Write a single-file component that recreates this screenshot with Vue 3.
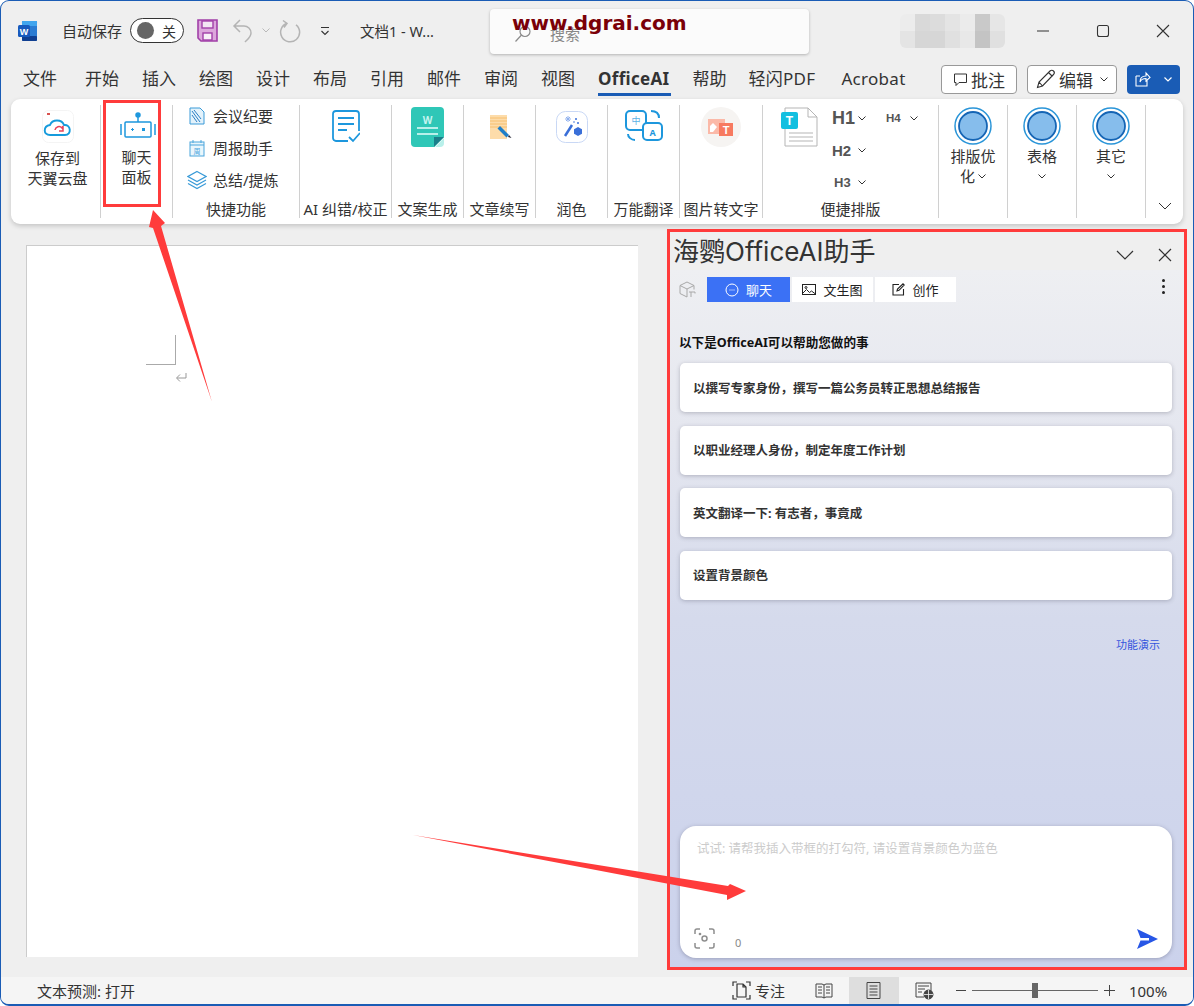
<script setup>
const menuTabs = ['文件', '开始', '插入', '绘图', '设计', '布局', '引用', '邮件', '审阅', '视图']
const cards = [
  '以撰写专家身份，撰写一篇公务员转正思想总结报告',
  '以职业经理人身份，制定年度工作计划',
  '英文翻译一下: 有志者，事竟成',
  '设置背景颜色'
]
const blurCells = ['#ececec','#d9d9d9','#dcdcdc','#e4e4e4','#ebebeb','#c9c9c9','#e6e6e6','#e4e4e4','#d6d6d6','#d6d6d6','#e0e0e0','#e8e8e8','#c4c4c4','#e0e0e0']
</script>

<template>
  <div class="window">
    <header class="titlebar">
      <svg class="word" width="20" height="22" viewBox="0 0 20 22">
        <rect x="4" y="1" width="15" height="20" rx="1.5" fill="#2b7cd3"/>
        <rect x="4" y="1" width="15" height="5" fill="#41a5ee"/>
        <rect x="4" y="11" width="15" height="5" fill="#2b7cd3"/>
        <rect x="4" y="16" width="15" height="5" rx="1" fill="#103f91"/>
        <rect x="0" y="5" width="12" height="12" rx="1.5" fill="#185abd"/>
        <text x="6" y="14.5" text-anchor="middle" class="word-w">W</text>
      </svg>
      <span class="autosave">自动保存</span>
      <div class="toggle"><i></i><span>关</span></div>
      <svg class="save" width="21" height="23" viewBox="0 0 21 23">
        <path d="M1 1h19v21H4l-3-3z" fill="#dca7dc" stroke="#a13fa8" stroke-width="1.6"/>
        <rect x="5" y="2" width="11" height="7" fill="#f3e5f3" stroke="#a13fa8" stroke-width="1.4"/>
        <rect x="6" y="14" width="9" height="7" fill="#f8f0f8" stroke="#a13fa8" stroke-width="1.4"/>
      </svg>
      <svg class="undo" width="22" height="26" viewBox="0 0 22 26" fill="none" stroke="#b4b4b4" stroke-width="1.5">
        <path d="M8 2 2 8l6 6M2 8h10a7 7 0 0 1 7 7c0 4-3 6-6 9"/>
      </svg>
      <svg class="chev-gray" width="8" height="5" viewBox="0 0 8 5" fill="none" stroke="#b9b9b9"><path d="m.5.5 3.5 3.5L7.500.5"/></svg>
      <svg class="redo" width="22" height="24" viewBox="0 0 22 24" fill="none" stroke="#b4b4b4" stroke-width="1.5">
        <path d="M8 4.300a9.500 9.500 0 1 0 9 1.500M4 1.500l4 3-3 4"/>
      </svg>
      <svg class="qat" width="10" height="10" viewBox="0 0 10 10" fill="none" stroke="#333" stroke-width="1.100">
        <path d="M1 1.500h8M1.500 5 5 8.500 8.500 5"/>
      </svg>
      <span class="docname">文档1   -   W...</span>
      <div class="search">
        <svg width="18" height="18" viewBox="0 0 18 18" fill="none" stroke="#8a8a8a" stroke-width="1.200"><circle cx="11" cy="6.500" r="5"/><path d="M7.500 10 1.500 16.500"/></svg>
        <span>搜索</span>
      </div>
      <div class="blur">
        <i v-for="(c, n) in blurCells" :key="n" :style="{ background: c }"></i>
      </div>
      <div class="winbtns">
        <svg width="14" height="14" viewBox="0 0 14 14" stroke="#333" fill="none" stroke-width="1.100"><path d="M1 7h12"/></svg>
        <svg width="14" height="14" viewBox="0 0 14 14" stroke="#333" fill="none" stroke-width="1.100"><rect x="1.500" y="1.500" width="11" height="11" rx="2"/></svg>
        <svg width="14" height="14" viewBox="0 0 14 14" stroke="#333" fill="none" stroke-width="1.100"><path d="m1 1 12 12M13 1 1 13"/></svg>
      </div>
    </header>

    <nav class="menubar">
      <span v-for="t in menuTabs" :key="t" class="mtab">{{ t }}</span>
      <span class="mtab active">OfficeAI</span>
      <span class="mtab">帮助</span>
      <span class="mtab wide">轻闪PDF</span>
      <span class="mtab wide acrobat">Acrobat</span>
      <div class="menu-actions">
        <button class="mbtn comment">
          <svg width="15" height="15" viewBox="0 0 15 15" fill="none" stroke="#333"><path d="M1.500 2h12v8.500H6l-3 3v-3H1.500z"/></svg>批注
        </button>
        <button class="mbtn edit">
          <svg width="20" height="20" viewBox="0 0 20 20" fill="none" stroke="#333" stroke-width="1.100"><path d="M1.500 18.500 3 13 14 2c1-1 2.500-1 3.500 0s1 2.500 0 3.500L6.500 17zM3 13l3.500 4M12.500 3.500l4 4"/></svg>编辑
          <svg class="ch" width="8" height="5" viewBox="0 0 8 5" fill="none" stroke="#333"><path d="m.5.500 3.500 3.500L7.500.500"/></svg>
        </button>
        <button class="mbtn share">
          <svg width="16" height="16" viewBox="0 0 16 16" fill="none" stroke="#fff" stroke-width="1.100"><path d="M1 5h4M1 5v10h11V9M5 11c0-4 2-6 6-6V2l4 4.500L11 10V7.500c-3 0-5 1-6 3.500z"/></svg>
          <svg width="8" height="5" viewBox="0 0 8 5" fill="none" stroke="#fff" stroke-width="1.200"><path d="m.5.500 3.500 3.500L7.500.500"/></svg>
        </button>
      </div>
    </nav>

    <section class="ribbon">
      <div class="rg first">
        <svg class="ic ic-cloud" width="32" height="33" viewBox="0 0 32 33">
          <rect x="0.500" y="0.500" width="31" height="32" rx="6" fill="#fff" stroke="#f4f4f4"/>
          <path d="M5 3h3v2H5z" fill="#d9534f"/>
          <path d="M8 25c-7 0-7-9 0-10 2-6 12-6 14 0 7-1 8 10 1 10z" fill="none" stroke="#169bdc" stroke-width="1.900"/>
          <path d="M13 20a4 4 0 0 1 7-2l1-2v5h-4" fill="none" stroke="#e8425a" stroke-width="1.500"/>
        </svg>
        <div class="rtext">保存到<br>天翼云盘</div>
      </div>
      <div class="rg robot">
        <svg class="ic ic-robot" width="36" height="28" viewBox="0 0 36 28" fill="none" stroke="#1d97dd" stroke-width="1.500">
          <circle cx="18" cy="3" r="2" fill="#1d97dd"/>
          <path d="M18 5v5"/>
          <rect x="5" y="10" width="26" height="15" rx="1"/>
          <path d="M1 12v11M35 12v11"/>
          <path d="M11 17.500h3M12.500 16v3" stroke-width="1"/>
          <rect x="22" y="16" width="3" height="3" fill="#1d97dd" stroke="none"/>
        </svg>
        <div class="rtext">聊天<br>面板</div>
      </div>
      <div class="rg">
        <div class="quick">
          <div class="qrow">
            <svg width="18" height="18" viewBox="0 0 18 18" fill="none" stroke="#3a9bd8"><path d="M2 1h10l4 4v12H2z" fill="#e3f2fb"/><path d="M4 4l8 11M6 3l7 9M4 8l5 7" stroke="#2b7fc4"/></svg>
            <span>会议纪要</span>
          </div>
          <div class="qrow">
            <svg width="18" height="18" viewBox="0 0 18 18" fill="none" stroke="#4aa5dc"><rect x="2" y="3" width="14" height="14" fill="#eaf6fc"/><path d="M2 6h14M5 1v3M13 1v3"/><text x="9" y="15" text-anchor="middle" class="cal">周</text></svg>
            <span>周报助手</span>
          </div>
          <div class="qrow">
            <svg width="20" height="20" viewBox="0 0 20 20" fill="none" stroke="#3a9bd8" stroke-width="1.200"><path d="m10 1.500 9 5-9 5-9-5zM1 10l9 5 9-5M1 13.500l9 5 9-5"/></svg>
            <span>总结/提炼</span>
          </div>
        </div>
        <div class="rlabel">快捷功能</div>
      </div>
      <div class="rg">
        <svg class="ic ic-check" width="28" height="33" viewBox="0 0 28 33" fill="none" stroke="#1d97dd" stroke-width="1.800">
          <path d="M16 31H4a3 3 0 0 1-3-3V4a3 3 0 0 1 3-3h20a3 3 0 0 1 3 3v17"/>
          <path d="M6 8h16M6 14h16M6 20h9"/>
          <path d="m17 27 4 4 7-8"/>
        </svg>
        <div class="rlabel">AI 纠错/校正</div>
      </div>
      <div class="rg">
        <svg class="ic ic-teal" width="33" height="40" viewBox="0 0 33 40">
          <path d="M4 0h25a4 4 0 0 1 4 4v26L23 40H4a4 4 0 0 1-4-4V4a4 4 0 0 1 4-4z" fill="#2fc7b7"/>
          <path d="M23 40V30h10z" fill="#1a7f8a"/>
          <path d="M24 40 33 31v5a4 4 0 0 1-4 4z" fill="#b8f0ea"/>
          <text x="16.500" y="17" text-anchor="middle" class="teal-w">W</text>
          <path d="M6 21h21M6 27h21" stroke="#b8f0ea" stroke-width="2"/>
        </svg>
        <div class="rlabel">文案生成</div>
      </div>
      <div class="rg">
        <svg class="ic ic-note" width="22" height="25" viewBox="0 0 22 25">
          <rect x="0" y="0" width="17" height="24" fill="#fddcaa"/>
          <path d="M0 3h17M0 6h17M0 9h17M0 12h17" stroke="#f5b860" stroke-width=".8"/>
          <path d="m10 11 9 9-2.500 2.500-9-9z" fill="#1f7fc9"/>
          <path d="m19 20 2.500 3-3.500-1z" fill="#223"/>
        </svg>
        <div class="rlabel">文章续写</div>
      </div>
      <div class="rg">
        <svg class="ic ic-wand" width="32" height="32" viewBox="0 0 32 32" fill="none">
          <rect x="0.500" y="0.500" width="31" height="31" rx="9" fill="#fff" stroke="#c9d8f5"/>
          <path d="m9 25 7-11" stroke="#3a6fd8" stroke-width="2.500"/>
          <path d="m22 16 4 2.300v4.500l-4 2.200-4-2.200v-4.500z" fill="#3a6fd8"/>
          <path d="M9 8h6M12 5v6M10 6l4 4M14 6l-4 4" stroke="#8fb0ee"/>
          <circle cx="20" cy="8" r="1" fill="#3a6fd8"/><circle cx="22" cy="12" r="1" fill="#3a6fd8"/><circle cx="18" cy="11" r=".8" fill="#3a6fd8"/>
        </svg>
        <div class="rlabel">润色</div>
      </div>
      <div class="rg">
        <svg class="ic ic-trans" width="38" height="31" viewBox="0 0 38 31" fill="none" stroke="#1d97dd" stroke-width="2">
          <rect x="1" y="1" width="20" height="19" rx="4"/>
          <rect x="18" y="13" width="19" height="17" rx="4" fill="#fff"/>
          <path d="M26 1c4 0 8 1 8 7M3 24c0 3 3 6 7 6"/>
          <text x="11" y="14" text-anchor="middle" class="tr-zh">中</text>
          <text x="27.500" y="26" text-anchor="middle" class="tr-a">A</text>
        </svg>
        <div class="rlabel">万能翻译</div>
      </div>
      <div class="rg">
        <svg class="ic ic-img" width="40" height="40" viewBox="0 0 40 40">
          <circle cx="20" cy="20" r="20" fill="#f6f4f2"/>
          <rect x="7" y="12" width="17" height="15" fill="#fbb9a8"/>
          <path d="M9 25v-6l3-3 4 4-4 5z" fill="#fff"/>
          <rect x="18" y="16" width="14" height="13" fill="#f77a60"/>
          <text x="25" y="27" text-anchor="middle" class="img-t">T</text>
        </svg>
        <div class="rlabel">图片转文字</div>
      </div>
      <div class="rg">
        <div class="quickfmt">
          <svg class="ic-doc" width="37" height="40" viewBox="0 0 37 40">
            <path d="M4 1h23l9 9v29H4z" fill="#fff" stroke="#b5b5b5"/>
            <path d="M27 1v9h9" fill="none" stroke="#b5b5b5"/>
            <path d="M8 26h24M8 30h24M8 34h24" stroke="#b5b5b5" stroke-width="1.200"/>
            <rect x="0" y="5" width="17" height="17" rx="2" fill="#12bfe0"/>
            <text x="8.500" y="18" text-anchor="middle" class="doc-t">T</text>
          </svg>
          <div class="heads">
            <span class="hd h1">H1</span><svg class="hc" width="8" height="5" viewBox="0 0 8 5" fill="none" stroke="#333"><path d="m.5.500 3.500 3.500L7.500.500"/></svg>
            <span class="hd h4">H4</span><svg class="hc" width="8" height="5" viewBox="0 0 8 5" fill="none" stroke="#333"><path d="m.5.500 3.500 3.500L7.500.500"/></svg>
            <span class="hd h2">H2</span><svg class="hc" width="8" height="5" viewBox="0 0 8 5" fill="none" stroke="#333"><path d="m.5.500 3.500 3.500L7.500.500"/></svg>
            <i></i><i></i>
            <span class="hd h3">H3</span><svg class="hc" width="8" height="5" viewBox="0 0 8 5" fill="none" stroke="#333"><path d="m.5.500 3.500 3.500L7.500.500"/></svg>
            <i></i><i></i>
          </div>
        </div>
        <div class="rlabel">便捷排版</div>
      </div>
      <div class="rg" v-for="item in [['排版优', '化'], ['表格', ''], ['其它', '']]" :key="item[0]">
        <svg class="ic ic-ring" width="38" height="38" viewBox="0 0 38 38">
          <circle cx="19" cy="19" r="18" fill="#fff" stroke="#2a95d8" stroke-width="1.500"/>
          <circle cx="19" cy="19" r="14" fill="#86bdec" stroke="#1565b5" stroke-width="1.800"/>
        </svg>
        <div class="ringtext">{{ item[0] }}</div>
        <div class="ringtext second">
          {{ item[1] }}<svg width="8" height="5" viewBox="0 0 8 5" fill="none" stroke="#333"><path d="m.5.500 3.500 3.500L7.500.500"/></svg>
        </div>
      </div>
      <div class="rg last">
        <svg width="14" height="8" viewBox="0 0 14 8" fill="none" stroke="#333"><path d="m1 1 6 6 6-6"/></svg>
      </div>
    </section>

    <main class="content">
      <div class="page">
        <div class="margin-mark"></div>
        <svg class="para" width="12" height="11" viewBox="0 0 12 11" fill="none" stroke="#999"><path d="M11 1v5H2M5 2.500 1.500 6 5 9.500"/></svg>
      </div>
      <aside class="panel">
        <div class="phead">
          <span class="ptitle">海鹦OfficeAI助手</span>
          <svg class="pchev" width="18" height="10" viewBox="0 0 18 10" fill="none" stroke="#333" stroke-width="1.200"><path d="m1 1 8 8 8-8"/></svg>
          <svg class="pclose" width="14" height="14" viewBox="0 0 14 14" fill="none" stroke="#333" stroke-width="1.200"><path d="m1 1 12 12M13 1 1 13"/></svg>
        </div>
        <div class="pbody">
          <div class="ptabs">
            <svg class="cube" width="17" height="17" viewBox="0 0 17 17" fill="none" stroke="#a8a8a8"><path d="m8 1 7 3.500v4M8 1 1 4.500v8L8 16M1 4.500 8 8v8M8 8l7-3.500M10 11h6v1.500M12 11v5"/></svg>
            <div class="ptab on">
              <svg width="14" height="14" viewBox="0 0 14 14" fill="none" stroke="#fff"><circle cx="7" cy="7" r="6"/><path d="M4.500 7h1M6.500 7h1M8.500 7h1"/></svg>聊天
            </div>
            <div class="ptab">
              <svg width="14" height="13" viewBox="0 0 14 13" fill="none" stroke="#222"><rect x=".5" y="1.500" width="13" height="10"/><path d="m1 10 3.500-3.500 3 3 2-1.500 4 3"/><circle cx="4" cy="4.500" r="1"/></svg>文生图
            </div>
            <div class="ptab">
              <svg width="13" height="13" viewBox="0 0 13 13" fill="none" stroke="#222" stroke-width="1.100"><path d="M7 1.500H1v10.500h10.500V6M5 8l.5-2L11 .8l1.200 1.200L7 7.300z"/></svg>创作
            </div>
            <div class="dots"><i></i><i></i><i></i></div>
          </div>
          <h2 class="intro">以下是OfficeAI可以帮助您做的事</h2>
          <div class="cards">
            <div v-for="c in cards" :key="c" class="card">{{ c }}</div>
          </div>
          <a class="demo">功能演示</a>
          <div class="input">
            <div class="ph">试试: 请帮我插入带框的打勾符, 请设置背景颜色为蓝色</div>
            <div class="input-foot">
              <svg width="21" height="21" viewBox="0 0 21 21" fill="none" stroke="#8f8f8f" stroke-width="1.500"><path d="M1 6V3a2 2 0 0 1 2-2h3M15 1h3a2 2 0 0 1 2 2v3M20 15v3a2 2 0 0 1-2 2h-3M6 20H3a2 2 0 0 1-2-2v-3"/><circle cx="10.500" cy="10.500" r="2.500"/><circle cx="6" cy="6" r=".6"/></svg>
              <span class="count">0</span>
              <svg class="send" width="22" height="20" viewBox="0 0 22 20"><path d="M1 0 22 10 1 20 4.500 11.500H13L13 9H4.500z" fill="#2756e6"/></svg>
            </div>
          </div>
        </div>
      </aside>
    </main>

    <footer class="status">
      <span class="predict">文本预测: 打开</span>
      <svg class="st-focus" width="19" height="19" viewBox="0 0 19 19" fill="none" stroke="#333" stroke-width="1.200"><path d="M1 5V1h4M14 1h4v4M18 14v4h-4M5 18H1v-4"/><path d="M5 3h6l3 3v10H5zM11 3v3h3"/></svg>
      <span class="st-txt">专注</span>
      <svg class="st-book" width="18" height="16" viewBox="0 0 18 16" fill="none" stroke="#444"><path d="M1 1h6l2 1 2-1h6v13h-6l-2 1-2-1H1zM9 2v13M3 4h4M3 7h4M3 10h4M11 4h4M11 7h4M11 10h4"/></svg>
      <div class="st-print">
        <svg width="15" height="17" viewBox="0 0 15 17" fill="none" stroke="#444"><path d="M1 .5h13v16H1zM3.500 4h8M3.500 7h8M3.500 10h8M3.500 13h8"/></svg>
      </div>
      <svg class="st-web" width="19" height="18" viewBox="0 0 19 18" fill="none" stroke="#444"><path d="M9 15H1V1h15v8M3 4h11M3 7h7M3 10h4"/><circle cx="13.500" cy="12.500" r="4.500" fill="#444"/><path d="M9 12.500h9M13.500 8v9" stroke="#f5f5f5" stroke-width=".8"/></svg>
      <span class="st-minus"></span>
      <div class="slider"><i></i></div>
      <svg class="st-plus" width="11" height="11" viewBox="0 0 11 11" stroke="#444"><path d="M0 5.500h11M5.500 0v11"/></svg>
      <span class="zoom">100%</span>
    </footer>

    <div class="watermark">www.dgrai.com</div>
    <div class="callout"></div>
    <svg class="arrows" width="1194" height="1006" viewBox="0 0 1194 1006">
      <path d="M212 402 161 226 165 223 153 210 149 227 153 228z" fill="#ff3b3b"/>
      <path d="M413 835 728 886 730 884 746 891 727 900 727 895z" fill="#ff3b3b"/>
    </svg>
  </div>
</template>

<style>
html, body { margin: 0; background: #fff; }
</style>

<style scoped>
.window {
  position: relative;
  box-sizing: border-box;
  width: 1194px;
  height: 1006px;
  background: #efefef;
  border: 1px solid #1a5cb5;
  border-width: 1px 1px 2px 1px;
  border-radius: 9px;
  overflow: hidden;
  font-family: "Noto Sans", "Noto Sans CJK SC", sans-serif;
  color: #333;
}
.titlebar {
  display: flex;
  align-items: center;
  height: 59px;
  font-size: 15px;
}
.titlebar > * { flex: none; }
.word { margin-left: 17px; }
.word-w { font: 700 9px "Liberation Sans", sans-serif; fill: #fff; }
.autosave { margin-left: 24px; width: 60px; white-space: nowrap; }
.toggle {
  box-sizing: border-box;
  width: 54px;
  height: 25px;
  margin-left: 8px;
  border: 1px solid #333;
  border-radius: 13px;
  background: #fff;
  display: flex;
  align-items: center;
  padding-left: 6px;
  gap: 8px;
  font-size: 14px;
}
.toggle i { width: 17px; height: 17px; border-radius: 50%; background: #666; }
.save { margin-left: 13px; }
.undo { margin-left: 14px; }
.chev-gray { margin-left: 8px; }
.redo { margin-left: 9px; }
.qat { margin-left: 19px; }
.docname { margin-left: 30px; width: 130px; white-space: pre; font-size: 14.500px; }
.search {
  box-sizing: border-box;
  width: 319px;
  height: 45px;
  margin-top: 1px;
  background: #fbfbfb;
  border-radius: 4px;
  box-shadow: 0 1px 3px rgba(0, 0, 0, .25);
  display: flex;
  align-items: center;
  padding: 5px 0 0 24px;
  gap: 18px;
  color: #888;
  font-size: 15px;
}
.blur {
  display: grid;
  grid-template-columns: repeat(7, 15px);
  grid-template-rows: 17px 17px;
  margin-left: 91px;
  border-radius: 6px;
  overflow: hidden;
}
.winbtns {
  display: flex;
  gap: 46px;
  margin-left: 31px;
}
.menubar {
  display: flex;
  align-items: center;
  box-sizing: border-box;
  height: 40px;
  margin-top: -1px;
  padding: 0 13px 0 22px;
  gap: 23px;
  font-size: 17px;
}
.mtab { position: relative; white-space: nowrap; line-height: 24px; }
.mtab:first-child { margin-right: 5px; }
.mtab.wide { letter-spacing: .3px; margin-left: -1px; }
.mtab.acrobat { margin-left: 3px; }
.mtab.active { font-weight: 700; color: #333; letter-spacing: .3px; }
.mtab.active::after {
  content: "";
  position: absolute;
  left: 0;
  right: -2px;
  bottom: -5px;
  height: 3px;
  background: #1a5cb5;
}
.menu-actions { display: flex; align-items: center; gap: 10px; margin-left: auto; }
.mbtn {
  box-sizing: border-box;
  height: 29px;
  display: flex;
  align-items: center;
  justify-content: center;
  gap: 3px;
  padding: 0;
  font: inherit;
  color: #333;
  background: #fff;
  border: 1px solid #999;
  border-radius: 4px;
}
.comment { width: 76px; }
.edit { width: 90px; }
.edit .ch { margin-left: 4px; }
.share {
  width: 53px;
  gap: 13px;
  background: #1a5cb5;
  border: none;
}
.ribbon {
  display: grid;
  grid-template-columns: 90px 72px 127px 92px 72px 72px 72px 72px 83px 176px 69px 69px 69px 37px;
  box-sizing: border-box;
  width: 1172px;
  height: 125px;
  margin-left: 10px;
  padding: 6px 0;
  background: #fff;
  border-radius: 9px;
  box-shadow: 0 2px 5px rgba(0, 0, 0, .18);
  font-size: 15px;
}
.rg {
  display: flex;
  flex-direction: column;
  align-items: center;
  border-right: 1px solid #d0d0d0;
  min-width: 0;
}
.rg.first { padding-left: 4px; }
.rg.robot { padding-left: 2px; }
.rg.last {
  border: none;
  justify-content: flex-end;
  padding: 0 0 8px;
}
.ic { flex: none; }
.ic-cloud { margin-top: 5px; }
.ic-robot { margin-top: 7px; }
.ic-check { margin-top: 5px; }
.ic-teal { margin-top: 2px; }
.ic-note { margin-top: 10px; margin-left: 2px; }
.ic-wand { margin-top: 6px; }
.ic-trans { margin-top: 5px; }
.ic-img { margin-top: 2px; }
.ic-ring { margin-top: 2px; }
.rtext { text-align: center; line-height: 20px; margin-top: 5px; }
.rg.robot .rtext { margin-top: 7px; margin-left: -2px; }
.rlabel {
  margin-top: auto;
  line-height: 20px;
  height: 20px;
  margin-bottom: -1px;
  white-space: nowrap;
}
.quick { display: flex; flex-direction: column; gap: 7px; align-self: flex-start; margin: -2px 0 0 14px; }
.qrow { display: flex; align-items: center; gap: 6px; height: 25px; white-space: nowrap; }
.qrow svg { width: 20px; flex: none; }
.cal { font: 7px "Noto Sans CJK SC", sans-serif; fill: #4aa5dc; stroke: none; }
.teal-w { font: 700 10px "Noto Sans", sans-serif; fill: #c6f5f0; }
.tr-zh { font: 9px "Noto Sans CJK SC", sans-serif; fill: #5cb3e6; stroke: none; }
.tr-a { font: 700 9px "Noto Sans", sans-serif; fill: #1d97dd; stroke: none; }
.img-t { font: 700 11px "Liberation Sans", sans-serif; fill: #fff; }
.doc-t { font: 700 12px "Liberation Sans", sans-serif; fill: #fff; }
.quickfmt { display: flex; align-self: flex-start; margin: 2px 0 0 18px; }
.ic-doc { flex: none; }
.heads {
  display: grid;
  grid-template-columns: 26px 28px 24px 8px;
  grid-auto-rows: 32px;
  align-items: center;
  margin: -5px 0 0 14px;
}
.hd { font-family: "Liberation Sans", sans-serif; font-weight: 700; color: #555; text-align: center; justify-self: start; }
.h1 { font-size: 18px; }
.h2 { font-size: 15px; }
.h3 { font-size: 13px; margin-left: 2px; }
.h4 { font-size: 11.500px; }
.ringtext { line-height: 20px; text-align: center; margin-top: 1px; white-space: nowrap; height: 20px; }
.ringtext.second { margin-top: 0; display: flex; align-items: center; gap: 3px; height: 20px; }
.content { display: flex; height: 753px; }
.page {
  box-sizing: border-box;
  position: relative;
  flex: none;
  width: 612px;
  height: 712px;
  margin: 21px 0 0 25px;
  background: #fff;
  border-top: 1px solid #ccc;
  border-left: 1px solid #ccc;
}
.margin-mark {
  position: absolute;
  left: 119px;
  top: 89px;
  width: 29px;
  height: 29px;
  border-right: 1px solid #aaa;
  border-bottom: 1px solid #aaa;
}
.para { position: absolute; left: 148px; top: 126px; }
.panel {
  box-sizing: border-box;
  flex: none;
  width: 520px;
  height: 741px;
  margin: 5px 0 0 29px;
  border: 3px solid #ff3b3b;
  display: flex;
  flex-direction: column;
}
.phead {
  flex: none;
  height: 38px;
  display: flex;
  align-items: center;
  padding-left: 3px;
  background: #efefef;
}
.ptitle {
  font-family: Inter, "Noto Sans CJK SC", sans-serif;
  font-size: 26px;
  line-height: 38px;
  margin: 2px auto 0 0;
  white-space: nowrap;
}
.pchev { margin-top: 8px; margin-right: -1px; }
.pclose { margin: 8px 12px 0 25px; }
.pbody {
  flex: 1;
  min-height: 0;
  display: flex;
  flex-direction: column;
  padding: 7px 12px 9px 10px;
  background: linear-gradient(#eeeff2, #e4e6ef 25%, #d5daec 50%, #cbd2ec);
}
.ptabs { display: flex; align-items: center; height: 25px; font-size: 13px; }
.cube { margin-left: -1px; }
.ptab {
  box-sizing: border-box;
  width: 81px;
  height: 25px;
  display: flex;
  align-items: center;
  justify-content: center;
  gap: 7px;
  background: #fff;
  color: #222;
  margin-right: 2px;
}
.ptab.on { width: 83px; background: #3b71f5; color: #fff; margin-left: 11px; }
.dots { display: flex; flex-direction: column; gap: 3px; margin-left: auto; margin-right: 7px; margin-top: -7px; }
.dots i { width: 3px; height: 3px; border-radius: 50%; background: #222; }
.intro {
  margin: 33px 0 0 -1px;
  font-size: 12.600px;
  line-height: 16px;
  font-weight: 700;
  color: #111;
}
.cards { display: flex; flex-direction: column; gap: 13.600px; margin-top: 12px; }
.card {
  box-sizing: border-box;
  height: 49px;
  display: flex;
  align-items: center;
  padding-left: 13px;
  padding-bottom: 1px;
  background: #fff;
  border-radius: 5px;
  box-shadow: 0 1px 4px rgba(60, 60, 80, .3);
  font-size: 12.500px;
  font-weight: 700;
  color: #333;
}
.demo {
  align-self: flex-end;
  margin: 37px 12px 0 0;
  font-size: 11px;
  line-height: 16px;
  color: #3355dd;
}
.input {
  box-sizing: border-box;
  margin-top: auto;
  height: 132px;
  display: flex;
  flex-direction: column;
  padding: 14px 14px 9px 14px;
  background: #fff;
  border-radius: 16px;
  box-shadow: 0 1px 4px rgba(60, 60, 90, .35);
}
.ph { font-size: 12.500px; line-height: 18px; color: #ccc; padding-left: 3px; }
.input-foot { margin-top: auto; display: flex; align-items: flex-end; }
.count { margin-left: 20px; font-size: 11px; line-height: 15px; color: #888; margin-bottom: -1px; }
.send { margin-left: auto; }
.status {
  display: flex;
  align-items: center;
  height: 27px;
  background: #f5f5f5;
  font-size: 15px;
}
.status > * { flex: none; }
.predict { margin-left: 36px; }
.st-focus { margin-left: 597px; }
.st-txt { margin-left: 4px; }
.st-book { margin-left: 30px; }
.st-print {
  width: 50px;
  height: 27px;
  margin-left: 16px;
  background: #dedede;
  display: flex;
  align-items: center;
  justify-content: center;
}
.st-web { margin-left: 16px; }
.st-minus { width: 10px; height: 1px; background: #444; margin-left: 22px; }
.slider {
  position: relative;
  width: 126px;
  height: 1px;
  margin-left: 6px;
  background: #666;
}
.slider i {
  position: absolute;
  left: 60px;
  top: -7px;
  width: 6px;
  height: 15px;
  background: #666;
}
.st-plus { margin-left: 6px; }
.zoom { margin-left: 14px; font-size: 15px; }
.watermark {
  position: absolute;
  left: 511px;
  top: 8px;
  font: 700 20px/28px "DejaVu Sans", sans-serif;
  color: #7a0008;
  white-space: nowrap;
}
.callout {
  position: absolute;
  left: 102px;
  top: 99px;
  width: 52px;
  height: 101px;
  border: 3px solid #ff3b3b;
}
.arrows { position: absolute; left: -1px; top: -1px; pointer-events: none; }
</style>
